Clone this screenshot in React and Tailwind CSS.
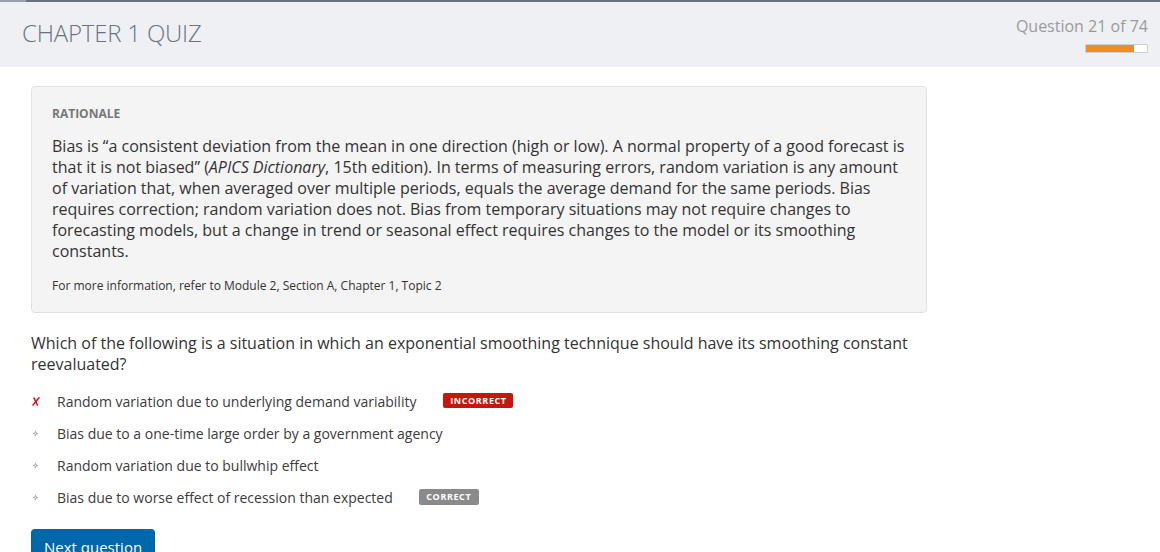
import React from "react";

const font = { fontFamily: '"Open Sans", "Noto Sans", sans-serif' };

function Bullet() {
  return (
    <svg width="7" height="7" viewBox="0 0 8 8" className="block">
      <path d="M4 0.3 L5.2 2.8 L7.7 4 L5.2 5.2 L4 7.7 L2.8 5.2 L0.3 4 L2.8 2.8 Z" fill="#b4b4b4" />
      <circle cx="4" cy="4" r="0.9" fill="#e6e6e6" />
    </svg>
  );
}

function Cross() {
  return (
    <svg width="8" height="9" viewBox="0 0 8 9" className="block">
      <path d="M2 1.2 C3 3 4 5 5.4 8" stroke="#e4111b" strokeWidth="1.6" fill="none" strokeLinecap="round" />
      <path d="M7 0.8 C5 3 3 5.5 1 8" stroke="#e4111b" strokeWidth="1.6" fill="none" strokeLinecap="round" />
    </svg>
  );
}

function Option({ icon, text, badge }) {
  return (
    <div className="flex h-8 items-center">
      <div className="flex w-[26px] justify-start pl-[1px]">{icon}</div>
      <span className="text-[14px] text-[#3b3b3b]">{text}</span>
      {badge}
    </div>
  );
}

export default function App() {
  return (
    <div style={font} className="min-h-[552px] w-[1160px] overflow-hidden bg-white">
      <div className="flex h-[2px]">
        <div className="w-[26px] bg-[#9aa0a6]" />
        <div className="flex-1 bg-[#6a737b]" />
      </div>
      <div className="flex h-[65px] justify-between bg-[#eff0f4] pl-[22px] pr-[12px]">
        <h1 className="pt-[14px] text-[24px] font-light leading-[34px] tracking-[-0.2px] text-[#6b7380]">
          CHAPTER 1 QUIZ
        </h1>
        <div className="flex flex-col items-end pt-[13px]">
          <div className="text-[16px] leading-[22px] text-[#9b9b9b]">Question 21 of 74</div>
          <div className="mt-[7px] h-[9px] w-[63px] rounded-[1px] border border-[#cfcfcf] bg-white">
            <div className="h-full w-[48px] bg-[#f28c1e]" />
          </div>
        </div>
      </div>

      <div className="ml-[31px] w-[896px] pt-[19px]">
        <div className="rounded-[4px] border border-[#e1e1e1] bg-[#f4f4f4] px-[20px] pb-[17px] pt-[18px]">
          <div className="text-[12px] font-bold leading-[18px] text-[#777777]">RATIONALE</div>
          <p className="mt-[13px] text-[16px] leading-[21px] text-[#333333]">
            Bias is “a consistent deviation from the mean in one direction (high or low). A normal property of a good forecast is that it is not biased” (<i>APICS Dictionary</i>, 15th edition). In terms of measuring errors, random variation is any amount of variation that, when averaged over multiple periods, equals the average demand for the same periods. Bias requires correction; random variation does not. Bias from temporary situations may not require changes to forecasting models, but a change in trend or seasonal effect requires changes to the model or its smoothing constants.
          </p>
          <p className="mt-[15px] text-[12px] leading-[18px] text-[#333333]">
            For more information, refer to Module 2, Section A, Chapter 1, Topic 2
          </p>
        </div>

        <p className="mt-[20px] text-[16px] leading-[21px] text-[#333333]">
          Which of the following is a situation in which an exponential smoothing technique should have its smoothing constant reevaluated?
        </p>

        <div className="mt-[10px]">
          <Option
            icon={<Cross />}
            text="Random variation due to underlying demand variability"
            badge={
              <span className="ml-[27px] mt-[-1px] inline-flex h-[15px] w-[70px] items-center justify-center rounded-[2px] bg-[#c4170f] text-[9px] font-bold tracking-[0.6px] text-white">
                INCORRECT
              </span>
            }
          />
          <Option icon={<Bullet />} text="Bias due to a one-time large order by a government agency" />
          <Option icon={<Bullet />} text="Random variation due to bullwhip effect" />
          <Option
            icon={<Bullet />}
            text="Bias due to worse effect of recession than expected"
            badge={
              <span className="ml-[26px] mt-[-1px] inline-flex h-[16px] w-[60px] items-center justify-center rounded-[2px] bg-[#8a8a8a] text-[9px] font-bold tracking-[0.6px] text-white">
                CORRECT
              </span>
            }
          />
        </div>

        <button className="mt-[16px] h-[38px] rounded-[4px] bg-[#0067ab] px-[13px] pb-[2px] text-[15px] text-white">
          Next question
        </button>
      </div>
    </div>
  );
}
